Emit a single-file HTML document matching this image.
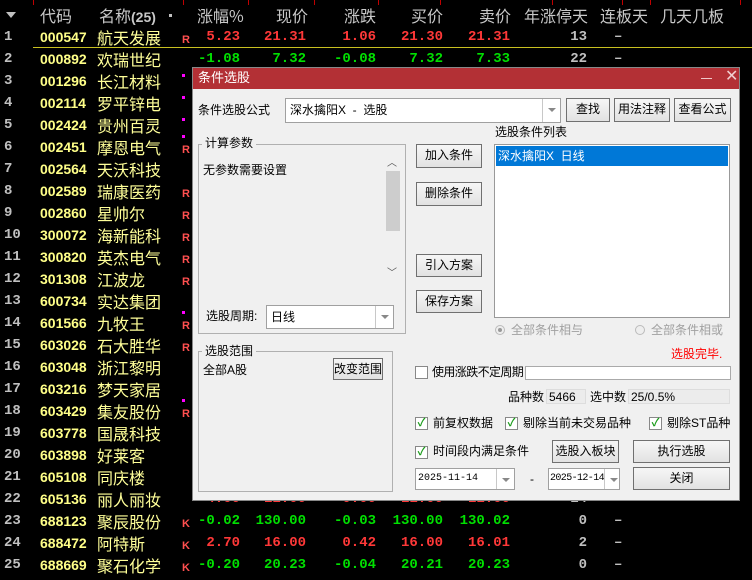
<!DOCTYPE html>
<html><head><meta charset="utf-8"><style>
*{margin:0;padding:0;box-sizing:border-box}
body{width:752px;height:580px;background:#000;position:relative;overflow:hidden;font-family:"Liberation Sans","Noto Sans CJK SC",sans-serif}
.a{position:absolute;white-space:nowrap}
.hd{position:absolute;top:5px;font-size:16px;color:#c8c8c8;font-family:"Noto Sans CJK SC",sans-serif;line-height:20px}
.r{position:absolute;left:0;width:752px;height:22px;font-size:15px;line-height:22px}
.n{position:absolute;left:4px;color:#c0c0c0;font-weight:bold;font-family:"Liberation Mono",monospace;font-size:14px}
.c{position:absolute;left:40px;color:#ffff88;font-weight:bold;font-family:"Liberation Sans",sans-serif;font-size:14px}
.m{position:absolute;left:97px;color:#ffff99;font-family:"Noto Sans CJK SC",sans-serif;font-size:16px}
.k{position:absolute;left:182px;color:#ff5050;font-weight:bold;font-size:11px;top:3px}
.p{position:absolute;left:182px;top:-1px;width:3px;height:3px;background:#ff00ff}
.v{position:absolute;text-align:right;font-weight:bold;font-family:"Liberation Mono",monospace;font-size:14px}
.R{color:#ff3838}.G{color:#00e000}.W{color:#c0c0c0}
.tk{position:absolute;top:0;width:1px;height:5px;background:#c00000}
.dlg{position:absolute;left:192px;top:67px;width:548px;height:434px;background:#f0f0f0;border:1px solid #888;font-family:"Liberation Sans","Noto Sans CJK SC",sans-serif;font-size:12px;color:#000}
.d{position:absolute;white-space:nowrap;font-size:12px;line-height:16px}
.btn{position:absolute;background:linear-gradient(#f6f6f6,#e2e2e2);border:1px solid #707070;font-size:12px;text-align:center;line-height:20px}
.box{position:absolute;background:#fff;border:1px solid #a0a0a0;font-size:12px;line-height:20px;padding-left:4px}
.arr{position:absolute;right:0;top:0;bottom:0;width:18px;border-left:1px solid #c8c8c8;background:#fff}
.arr:after{content:"";position:absolute;left:5px;top:9px;border:4px solid transparent;border-top:4px solid #888}
.grp{position:absolute;border:1px solid #b0b0b0}
.gl{position:absolute;background:#f0f0f0;padding:0 3px;font-size:12px;line-height:14px}
.cb{position:absolute;width:13px;height:13px;border:1px solid #888;background:#fff;font-size:11px;line-height:11px;color:#1a9c1a;text-align:center;font-weight:bold}
</style></head><body>
<div class="tk" style="left:33px"></div><div class="tk" style="left:183px"></div><div class="tk" style="left:248px"></div><div class="tk" style="left:314px"></div><div class="tk" style="left:378px"></div><div class="tk" style="left:440px"></div><div class="tk" style="left:552px"></div><div class="tk" style="left:622px"></div><div class="tk" style="left:650px"></div><div class="tk" style="left:740px"></div>
<div class="a" style="left:6px;top:12px;border:5px solid transparent;border-top:6px solid #c0c0c0"></div>
<div class="hd" style="left:40px">代码</div>
<div class="hd" style="left:99px">名称<b style="font-family:'Liberation Sans';font-size:14px">(25)</b></div>
<div class="a" style="left:169px;top:14px;width:3px;height:3px;background:#c0c0c0"></div>
<div class="hd" style="left:197px">涨幅%</div>
<div class="hd" style="left:276px">现价</div>
<div class="hd" style="left:344px">涨跌</div>
<div class="hd" style="left:411px">买价</div>
<div class="hd" style="left:479px">卖价</div>
<div class="hd" style="left:524px">年涨停天</div>
<div class="hd" style="left:600px">连板天</div>
<div class="hd" style="left:660px">几天几板</div>

<div class="r" style="top:26px"><span class="n">1</span><span class="c">000547</span><span class="m">航天发展</span><span class="k">R</span><span class="v R" style="right:512px">5.23</span><span class="v R" style="right:446px">21.31</span><span class="v R" style="right:376px">1.06</span><span class="v R" style="right:309px">21.30</span><span class="v R" style="right:242px">21.31</span><span class="v W" style="right:165px">13</span><span class="v W" style="left:614px">–</span></div>
<div class="a" style="left:33px;top:47px;width:719px;height:1px;background:#c8c020"></div>
<div class="r" style="top:48px"><span class="n">2</span><span class="c">000892</span><span class="m">欢瑞世纪</span><span class="v G" style="right:512px">-1.08</span><span class="v G" style="right:446px">7.32</span><span class="v G" style="right:376px">-0.08</span><span class="v G" style="right:309px">7.32</span><span class="v G" style="right:242px">7.33</span><span class="v W" style="right:165px">22</span><span class="v W" style="left:614px">–</span></div>
<div class="r" style="top:70px"><span class="n">3</span><span class="c">001296</span><span class="m">长江材料</span><span class="p" style="top:4px"></span></div>
<div class="r" style="top:92px"><span class="n">4</span><span class="c">002114</span><span class="m">罗平锌电</span><span class="p" style="top:4px"></span></div>
<div class="r" style="top:114px"><span class="n">5</span><span class="c">002424</span><span class="m">贵州百灵</span><span class="p" style="top:4px"></span></div>
<div class="r" style="top:136px"><span class="n">6</span><span class="c">002451</span><span class="m">摩恩电气</span><span class="p"></span><span class="k">R</span></div>
<div class="r" style="top:158px"><span class="n">7</span><span class="c">002564</span><span class="m">天沃科技</span></div>
<div class="r" style="top:180px"><span class="n">8</span><span class="c">002589</span><span class="m">瑞康医药</span><span class="k">R</span></div>
<div class="r" style="top:202px"><span class="n">9</span><span class="c">002860</span><span class="m">星帅尔</span><span class="k">R</span></div>
<div class="r" style="top:224px"><span class="n">10</span><span class="c">300072</span><span class="m">海新能科</span><span class="k">R</span></div>
<div class="r" style="top:246px"><span class="n">11</span><span class="c">300820</span><span class="m">英杰电气</span><span class="k">R</span></div>
<div class="r" style="top:268px"><span class="n">12</span><span class="c">301308</span><span class="m">江波龙</span><span class="k">R</span></div>
<div class="r" style="top:290px"><span class="n">13</span><span class="c">600734</span><span class="m">实达集团</span></div>
<div class="r" style="top:312px"><span class="n">14</span><span class="c">601566</span><span class="m">九牧王</span><span class="p"></span><span class="k">R</span></div>
<div class="r" style="top:334px"><span class="n">15</span><span class="c">603026</span><span class="m">石大胜华</span><span class="k">R</span></div>
<div class="r" style="top:356px"><span class="n">16</span><span class="c">603048</span><span class="m">浙江黎明</span></div>
<div class="r" style="top:378px"><span class="n">17</span><span class="c">603216</span><span class="m">梦天家居</span></div>
<div class="r" style="top:400px"><span class="n">18</span><span class="c">603429</span><span class="m">集友股份</span><span class="p"></span><span class="k">R</span></div>
<div class="r" style="top:422px"><span class="n">19</span><span class="c">603778</span><span class="m">国晟科技</span></div>
<div class="r" style="top:444px"><span class="n">20</span><span class="c">603898</span><span class="m">好莱客</span></div>
<div class="r" style="top:466px"><span class="n">21</span><span class="c">605108</span><span class="m">同庆楼</span></div>
<div class="r" style="top:488px"><span class="n">22</span><span class="c">605136</span><span class="m">丽人丽妆</span><span class="v R" style="right:512px">4.00</span><span class="v R" style="right:446px">11.00</span><span class="v R" style="right:376px">0.00</span><span class="v R" style="right:309px">11.00</span><span class="v R" style="right:242px">11.00</span><span class="v W" style="right:165px">14</span></div>
<div class="r" style="top:510px"><span class="n">23</span><span class="c">688123</span><span class="m">聚辰股份</span><span class="k">K</span><span class="v G" style="right:512px">-0.02</span><span class="v G" style="right:446px">130.00</span><span class="v G" style="right:376px">-0.03</span><span class="v G" style="right:309px">130.00</span><span class="v G" style="right:242px">130.02</span><span class="v W" style="right:165px">0</span><span class="v W" style="left:614px">–</span></div>
<div class="r" style="top:532px"><span class="n">24</span><span class="c">688472</span><span class="m">阿特斯</span><span class="k">K</span><span class="v R" style="right:512px">2.70</span><span class="v R" style="right:446px">16.00</span><span class="v R" style="right:376px">0.42</span><span class="v R" style="right:309px">16.00</span><span class="v R" style="right:242px">16.01</span><span class="v W" style="right:165px">2</span><span class="v W" style="left:614px">–</span></div>
<div class="r" style="top:554px"><span class="n">25</span><span class="c">688669</span><span class="m">聚石化学</span><span class="k">K</span><span class="v G" style="right:512px">-0.20</span><span class="v G" style="right:446px">20.23</span><span class="v G" style="right:376px">-0.04</span><span class="v G" style="right:309px">20.21</span><span class="v G" style="right:242px">20.23</span><span class="v W" style="right:165px">0</span><span class="v W" style="left:614px">–</span></div>

<div class="dlg">
 <div style="position:absolute;left:0;top:0;width:546px;height:21px;background:#b33035"></div>
 <div class="d" style="left:5px;top:2px;color:#fff;font-size:13px">条件选股</div>
 <div class="a" style="left:508px;top:10px;width:11px;height:1px;background:#f0c8c8"></div>
 <div class="d" style="left:532px;top:1px;color:#f0d0d0;font-size:16px">✕</div>

 <div class="d" style="left:5px;top:34px">条件选股公式</div>
 <div class="box" style="left:92px;top:30px;width:276px;height:25px;line-height:23px">深水擒阳X &nbsp;- &nbsp;选股<span class="arr"></span></div>
 <div class="btn" style="left:373px;top:30px;width:44px;height:24px">查找</div>
 <div class="btn" style="left:421px;top:30px;width:56px;height:24px">用法注释</div>
 <div class="btn" style="left:481px;top:30px;width:57px;height:24px">查看公式</div>

 <div class="grp" style="left:5px;top:76px;width:208px;height:190px"></div>
 <div class="gl" style="left:9px;top:68px">计算参数</div>
 <div class="d" style="left:10px;top:94px">无参数需要设置</div>
 <div class="a" style="left:191px;top:88px;width:16px;height:124px;background:#f0f0f0"></div>
 <div class="a" style="left:193px;top:103px;width:14px;height:60px;background:#cdcdcd"></div>
 <div class="d" style="left:194px;top:88px;font-size:10px;color:#555">︿</div>
 <div class="d" style="left:194px;top:198px;font-size:10px;color:#555">﹀</div>
 <div class="d" style="left:13px;top:240px">选股周期:</div>
 <div class="box" style="left:73px;top:237px;width:128px;height:24px;line-height:22px">日线<span class="arr"></span></div>

 <div class="btn" style="left:223px;top:76px;width:66px;height:24px">加入条件</div>
 <div class="btn" style="left:223px;top:114px;width:66px;height:24px">删除条件</div>
 <div class="btn" style="left:223px;top:186px;width:66px;height:23px">引入方案</div>
 <div class="btn" style="left:223px;top:222px;width:66px;height:23px">保存方案</div>

 <div class="d" style="left:302px;top:56px">选股条件列表</div>
 <div class="a" style="left:301px;top:76px;width:236px;height:174px;background:#fff;border:1px solid #999"></div>
 <div class="a" style="left:303px;top:78px;width:232px;height:20px;background:#0078d7;color:#fff;font-size:12px;line-height:20px;padding-left:2px">深水擒阳X &nbsp;日线</div>
 <div class="a" style="left:302px;top:257px;width:10px;height:10px;border-radius:50%;border:1px solid #bbb;background:#eee"><div style="margin:2px;width:4px;height:4px;border-radius:50%;background:#999"></div></div>
 <div class="d" style="left:318px;top:254px;color:#a0a0a0">全部条件相与</div>
 <div class="a" style="left:442px;top:257px;width:10px;height:10px;border-radius:50%;border:1px solid #bbb;background:#eee"></div>
 <div class="d" style="left:458px;top:254px;color:#a0a0a0">全部条件相或</div>

 <div class="grp" style="left:5px;top:283px;width:195px;height:141px"></div>
 <div class="gl" style="left:9px;top:276px">选股范围</div>
 <div class="d" style="left:10px;top:294px">全部A股</div>
 <div class="btn" style="left:140px;top:290px;width:50px;height:22px">改变范围</div>

 <div class="d" style="left:478px;top:278px;color:#f00">选股完毕.</div>
 <div class="cb" style="left:222px;top:298px"></div>
 <div class="d" style="left:239px;top:296px;letter-spacing:-0.6px">使用涨跌不定周期</div>
 <div class="a" style="left:332px;top:298px;width:206px;height:14px;background:#fff;border:1px solid #aaa"></div>
 <div class="d" style="left:315px;top:321px">品种数</div>
 <div class="a" style="left:353px;top:321px;width:40px;height:15px;border:1px solid #ddd;background:#ececec;font-size:12px;line-height:14px;padding-left:2px">5466</div>
 <div class="d" style="left:397px;top:321px">选中数</div>
 <div class="a" style="left:435px;top:321px;width:102px;height:15px;border:1px solid #ddd;background:#ececec;font-size:12px;line-height:14px;padding-left:2px">25/0.5%</div>

 <div class="cb" style="left:222px;top:349px">✓</div><div class="d" style="left:240px;top:347px">前复权数据</div>
 <div class="cb" style="left:312px;top:349px">✓</div><div class="d" style="left:330px;top:347px">剔除当前未交易品种</div>
 <div class="cb" style="left:456px;top:349px">✓</div><div class="d" style="left:474px;top:347px">剔除ST品种</div>
 <div class="cb" style="left:222px;top:378px">✓</div><div class="d" style="left:240px;top:375px">时间段内满足条件</div>
 <div class="btn" style="left:359px;top:372px;width:67px;height:23px">选股入板块</div>
 <div class="btn" style="left:440px;top:372px;width:97px;height:23px">执行选股</div>
 <div class="box" style="left:222px;top:400px;width:100px;height:22px;font-family:'Liberation Mono',monospace;font-size:10px;line-height:20px;padding-left:2px">2025-11-14<span class="arr"></span></div>
 <div class="d" style="left:337px;top:403px">-</div>
 <div class="box" style="left:355px;top:400px;width:72px;height:22px;font-family:'Liberation Mono',monospace;font-size:10px;letter-spacing:-0.6px;line-height:20px;padding-left:1px;overflow:hidden">2025-12-14<span class="arr" style="width:15px"></span></div>
 <div class="btn" style="left:440px;top:399px;width:97px;height:23px">关闭</div>
</div>
</body></html>
